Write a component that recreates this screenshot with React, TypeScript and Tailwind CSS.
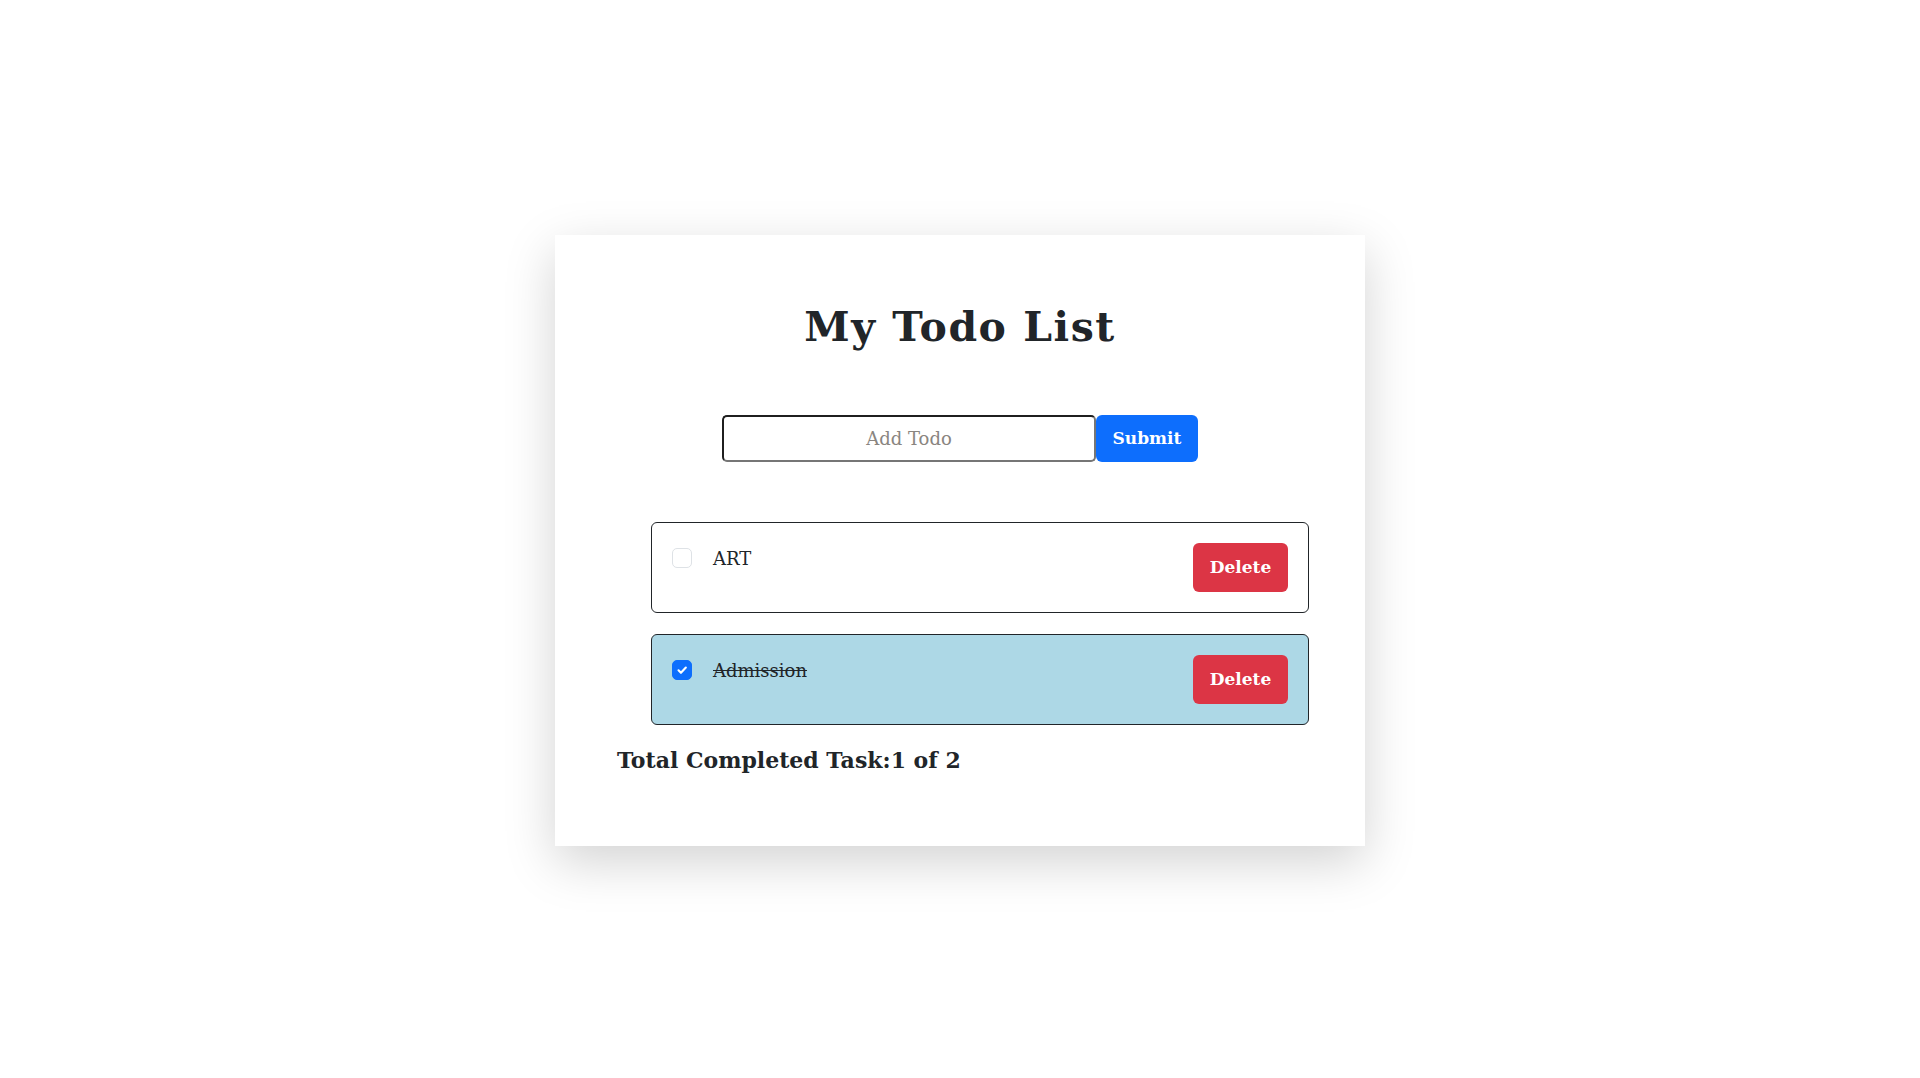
import { useState } from 'react';

interface Todo {
    id: number;
    text: string;
    done: boolean;
}

const slab = { fontFamily: '"DejaVu Serif", "Liberation Serif", serif' };

export default function App() {
    const [todos, setTodos] = useState<Todo[]>([
        { id: 1, text: 'ART', done: false },
        { id: 2, text: 'Admission', done: true },
    ]);
    const [value, setValue] = useState('');

    const toggle = (id: number) => {
        setTodos(todos.map((t) => (t.id === id ? { ...t, done: !t.done } : t)));
    };

    const remove = (id: number) => {
        setTodos(todos.filter((t) => t.id !== id));
    };

    const submit = (e: React.FormEvent) => {
        e.preventDefault();
        if (!value.trim()) return;
        setTodos([...todos, { id: Date.now(), text: value, done: false }]);
        setValue('');
    };

    const completed = todos.filter((t) => t.done).length;

    return (
        <div className="h-screen w-full bg-white flex items-center justify-center pt-[3px] text-[#212529]" style={slab}>
            <div className="w-[810px] h-[611px] bg-white shadow-[0_16px_48px_rgba(0,0,0,0.175)] pt-[68px]">
                <h1 className="h-[48px] leading-[48px] text-center text-[41px] tracking-[1.5px] font-bold">My Todo List</h1>

                {/* Add form */}
                <form onSubmit={submit} className="mt-[64px] flex justify-center">
                    <input
                        value={value}
                        onChange={(e) => setValue(e.target.value)}
                        placeholder="Add Todo"
                        className="w-[374px] h-[47px] rounded-[5px] border-2 border-t-[#1f1f1f] border-l-[#1f1f1f] border-r-[#767676] border-b-[#767676] text-center text-[18px] font-light placeholder:text-[#8a8580] outline-none"
                    />
                    <button type="submit" className="w-[102px] h-[47px] rounded-[6px] bg-[#0d6efd] text-white text-[17px] font-bold">
                        Submit
                    </button>
                </form>

                {/* Todo list */}
                <div className="mt-[60px] pl-[62px] pr-[56px]">
                    <ul className="ml-[34px] flex flex-col gap-[21px]">
                        {todos.map((todo) => (
                            <li
                                key={todo.id}
                                className={`h-[91px] rounded-[6px] border border-[#212529] p-[20px] flex items-start justify-between ${todo.done ? 'bg-[#add8e6]' : 'bg-white'}`}
                            >
                                <div className="flex items-center h-[30px] gap-[21px]">
                                    <button
                                        onClick={() => toggle(todo.id)}
                                        className={`w-[20px] h-[20px] rounded-[5px] flex items-center justify-center ${todo.done ? 'bg-[#0d6efd] border border-[#0d6efd]' : 'bg-white border border-[#dee2e6]'}`}
                                    >
                                        {todo.done && (
                                            <svg viewBox="0 0 20 20" className="w-[14px] h-[14px]">
                                                <path d="M5 10.5l3.5 3.5 7-7.5" fill="none" stroke="#fff" strokeWidth="3" strokeLinecap="round" strokeLinejoin="round" />
                                            </svg>
                                        )}
                                    </button>
                                    <span className={`text-[18px] font-light ${todo.done ? 'line-through' : ''}`}>{todo.text}</span>
                                </div>
                                <button
                                    onClick={() => remove(todo.id)}
                                    className="w-[95px] h-[49px] rounded-[6px] bg-[#dc3545] text-white text-[17px] font-bold"
                                >
                                    Delete
                                </button>
                            </li>
                        ))}
                    </ul>
                    <h4 className="mt-[21px] h-[29px] leading-[29px] text-[22px] font-bold">
                        Total Completed Task:{completed} of {todos.length}
                    </h4>
                </div>
            </div>
        </div>
    );
}
